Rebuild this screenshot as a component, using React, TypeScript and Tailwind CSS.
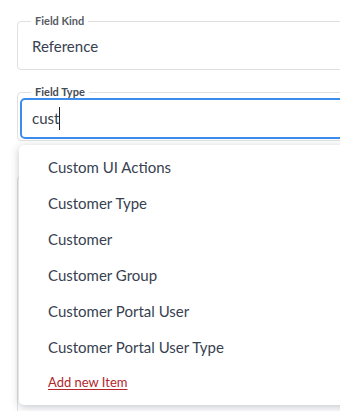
import React from "react";

const options = [
  "Custom UI Actions",
  "Customer Type",
  "Customer",
  "Customer Group",
  "Customer Portal User",
  "Customer Portal User Type",
];

const App = () => {
  return (
    <div className="relative w-[340px] h-[411px] overflow-hidden bg-white font-['Lato',sans-serif] text-[#384150]">
      <div className="flex h-full">
        <div className="w-[2px] bg-[#f2f2f2]" />
        <div className="w-px bg-[#dcdcdc]" />
        <div className="flex flex-col gap-[15px] pl-[17px] pt-[14px]">
          <fieldset className="shrink-0 w-[340px] h-[56px] rounded-[4px] border border-[#e0e0e0] pl-[13px] pr-2">
            <legend className="px-1 text-[11px] font-bold leading-[14px] text-[#555b63]">Field Kind</legend>
            <div className="pl-[1px] pt-[8px] text-[15px] leading-5">Reference</div>
          </fieldset>

          <fieldset className="shrink-0 w-[340px] h-[56px] rounded-[4px] border border-[#e0e0e0] pl-[13px] pr-[2px] pb-[2px]">
            <legend className="px-1 text-[11px] font-bold leading-[14px] text-[#464c54]">Field Type</legend>
            <div className="-ml-[11px] mt-[-1px] flex h-[41px] items-center rounded-[5px] border-2 border-[#3c8cee] pl-[10px] text-[15px]">
              <span>cust</span>
              <span className="h-[23px] w-px bg-[#222]" />
            </div>
          </fieldset>

          <fieldset className="shrink-0 mt-[20px] w-[340px] h-[300px] rounded-[4px] border border-[#e0e0e0]" />
        </div>
      </div>

      <ul className="absolute left-[19px] top-[145px] w-[340px] rounded-[5px] bg-white py-1 shadow-[0_2px_8px_rgba(60,70,90,0.3)]">
        {options.map((o) => (
          <li key={o} className="flex h-9 items-center pl-[29px] text-[15px] text-[#384150]">
            {o}
          </li>
        ))}
        <li className="flex h-9 items-center pl-[29px] text-[13px]">
          <a className="text-[#b3262b] underline underline-offset-2">Add new Item</a>
        </li>
      </ul>
    </div>
  );
};

export default App;
